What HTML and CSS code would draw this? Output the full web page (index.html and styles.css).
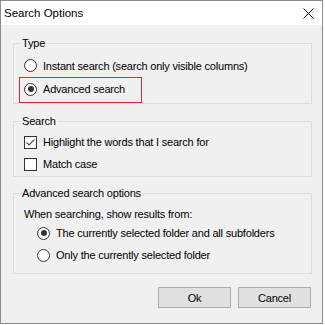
FILE: index.html
```html
<!DOCTYPE html>
<html>
<head>
<meta charset="utf-8">
<link rel="stylesheet" href="styles.css">
</head>
<body>
<div class="window">
  <div class="titlebar">
    <span class="title">Search Options</span>
    <svg class="close" width="11" height="11" viewBox="0 0 11 11"><path d="M0.5 0.5L10.5 10.5M10.5 0.5L0.5 10.5" stroke="#000" stroke-width="1" fill="none"/></svg>
  </div>
  <div class="content">
    <fieldset class="group group-type">
      <legend>Type</legend>
      <div class="opt opt-first"><span class="radio"></span><span>Instant search (search only visible columns)</span></div>
      <div class="opt focus"><span class="radio checked"></span><span>Advanced search</span></div>
    </fieldset>
    <fieldset class="group group-search">
      <legend>Search</legend>
      <div class="opt"><span class="check checked"><svg width="13" height="13" viewBox="0 0 13 13"><path d="M2.5 6.5L5 9L10.5 3.5" stroke="#4a4a4a" stroke-width="1.1" fill="none"/></svg></span><span>Highlight the words that I search for</span></div>
      <div class="opt"><span class="check"></span><span>Match case</span></div>
    </fieldset>
    <fieldset class="group group-adv">
      <legend>Advanced search options</legend>
      <div class="line">When searching, show results from:</div>
      <div class="opt indent"><span class="radio checked"></span><span>The currently selected folder and all subfolders</span></div>
      <div class="opt indent"><span class="radio"></span><span>Only the currently selected folder</span></div>
    </fieldset>
    <div class="buttons">
      <button class="btn">Ok</button>
      <button class="btn">Cancel</button>
    </div>
  </div>
</div>
</body>
</html>
```
FILE: styles.css
```css
html, body {
  margin: 0;
  padding: 0;
  background: #ffffff;
}
body {
  font-family: "Liberation Sans", Arial, sans-serif;
  font-size: 11px;
  letter-spacing: -0.2px;
  color: #000;
}
.window {
  width: 321px;
  height: 322px;
  border: 1px solid #8c8c8c;
  background: #f0f0f0;
  display: flex;
  flex-direction: column;
}
.titlebar {
  height: 24px;
  background: #ffffff;
  display: flex;
  align-items: center;
  justify-content: space-between;
  padding: 0 8px 0 3px;
}
.title {
  font-size: 11.5px;
  letter-spacing: 0;
}
.close {
  display: block;
  margin-top: 1px;
}
.content {
  padding: 10px 10px 0 12px;
  display: flex;
  flex-direction: column;
}
.group {
  margin: 0;
  border: 1px solid #dcdcdc;
  min-inline-size: 0;
  padding: 3px 10px 0 10px;
}
.group legend {
  padding: 0 2px;
  margin-left: -4px;
  line-height: 16px;
}
.group-search {
  margin-top: 9px;
  padding-top: 2px;
  padding-bottom: 1px;
}
.group-adv {
  margin-top: 8px;
  padding-top: 5px;
  padding-bottom: 7px;
}
.opt {
  display: flex;
  align-items: center;
  height: 22px;
}
.opt-first {
  height: 23px;
}
.radio, .check {
  width: 11px;
  height: 11px;
  border: 1px solid #333;
  background: #fff;
  margin-right: 6px;
  flex: none;
  display: flex;
  align-items: center;
  justify-content: center;
  position: relative;
}
.radio {
  border-radius: 50%;
}
.radio.checked::after {
  content: "";
  width: 6px;
  height: 6px;
  border-radius: 50%;
  background: #333;
}
.check svg {
  display: block;
  position: absolute;
  left: -1px;
  top: -1px;
}
.focus {
  border: 1px solid #e0262e;
  width: 123px;
  height: 26px;
  box-sizing: border-box;
  margin-left: -5px;
  padding-left: 4px;
  padding-bottom: 2px;
}
.line {
  line-height: 16px;
}
.indent {
  padding-left: 13px;
}
.buttons {
  display: flex;
  justify-content: flex-end;
  gap: 7px;
  margin-top: 13px;
  padding-right: 1px;
}
.btn {
  width: 73px;
  height: 21px;
  border: 1px solid #adadad;
  background: #e1e1e1;
  font-family: "Liberation Sans", Arial, sans-serif;
  font-size: 11px;
  letter-spacing: -0.2px;
  color: #000;
  padding: 0;
  margin: 0;
}
```
